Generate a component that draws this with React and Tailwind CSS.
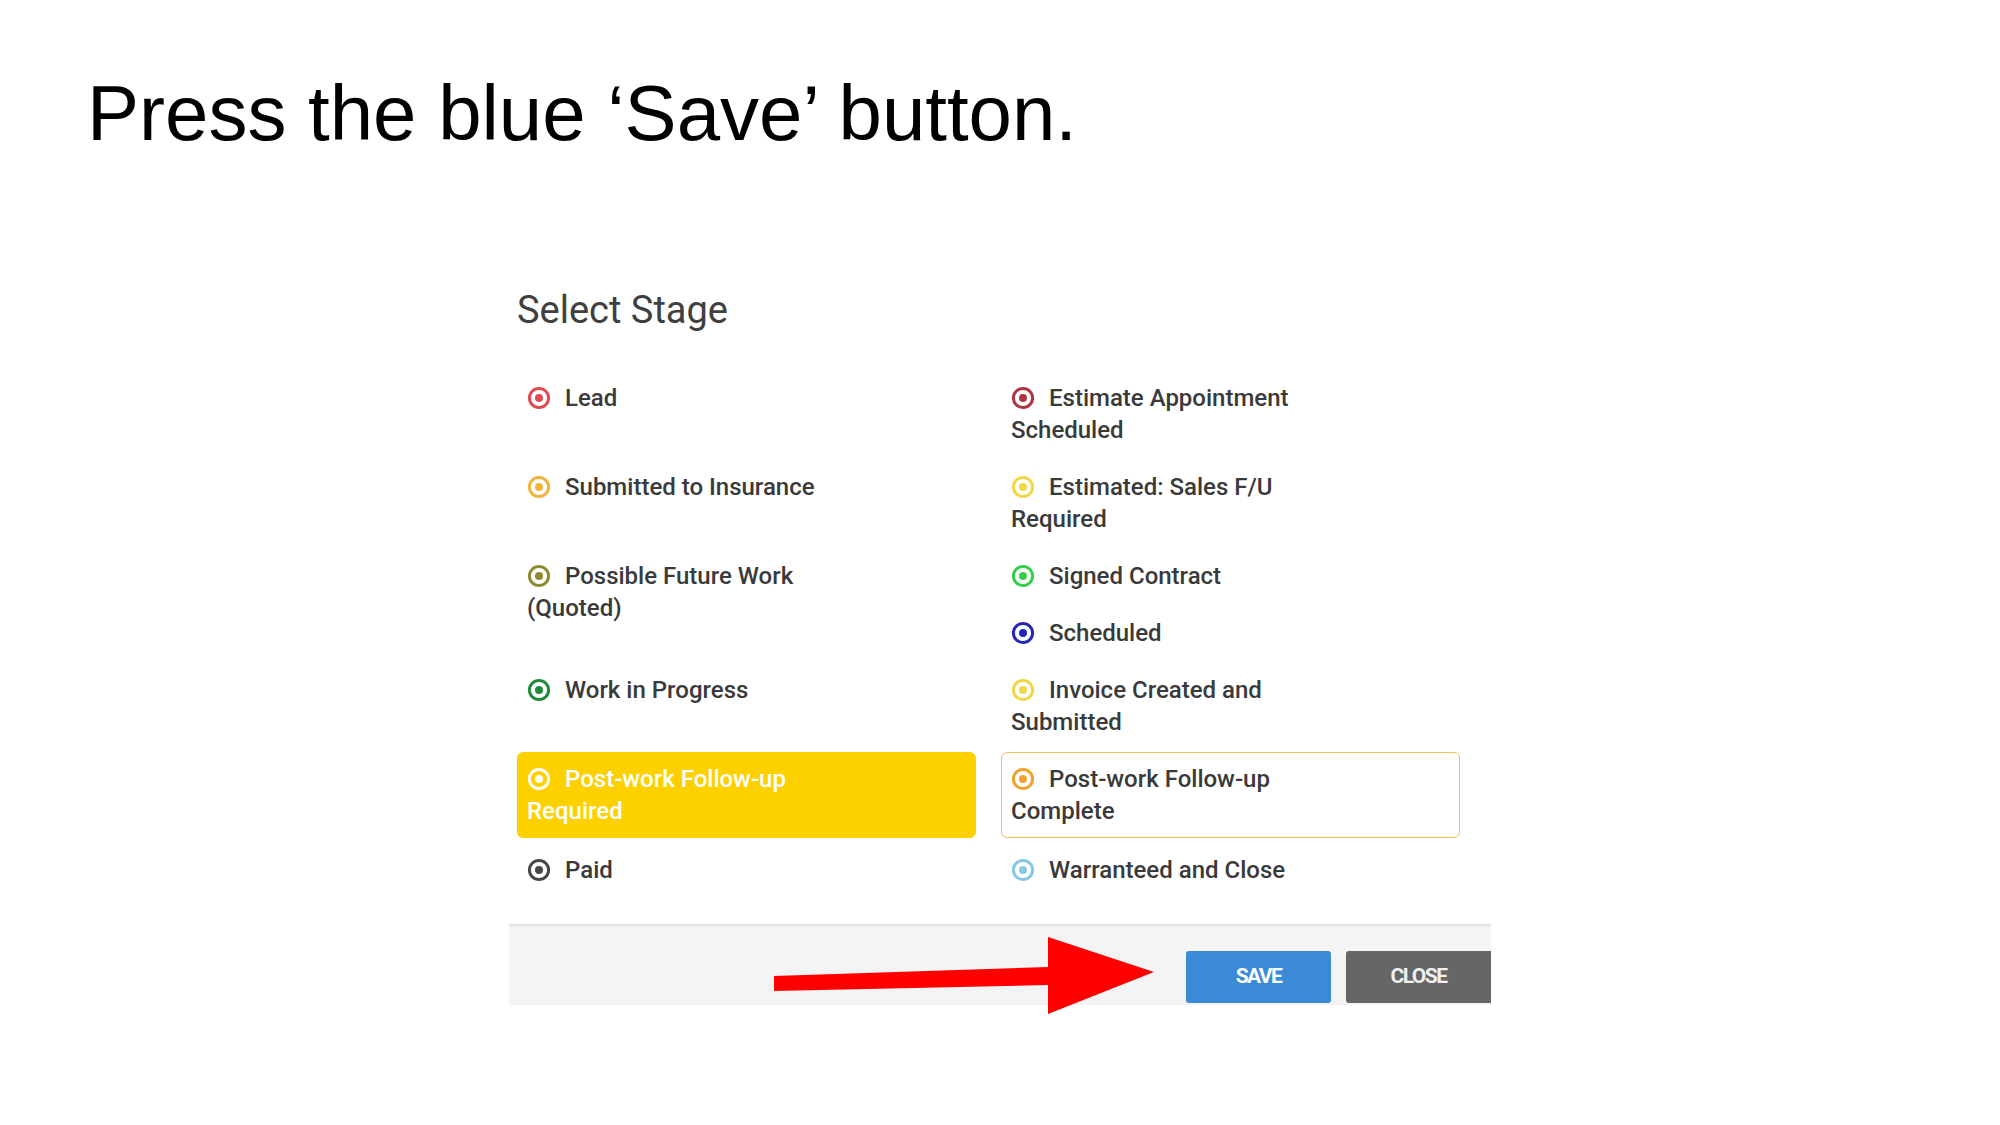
import React from 'react';

// Stage list, laid out as two columns of rows (right cell of row 3 holds two stages)
const rows = [
  [[{ label: 'Lead', color: '#e04a55' }], [{ label: 'Estimate Appointment Scheduled', color: '#ad3643' }]],
  [[{ label: 'Submitted to Insurance', color: '#efb43e' }], [{ label: 'Estimated: Sales F/U Required', color: '#f1d646' }]],
  [
    [{ label: 'Possible Future Work (Quoted)', color: '#8c8c2c' }],
    [
      { label: 'Signed Contract', color: '#34cf48' },
      { label: 'Scheduled', color: '#2626b6' },
    ],
  ],
  [[{ label: 'Work in Progress', color: '#208a3c' }], [{ label: 'Invoice Created and Submitted', color: '#f1d646' }]],
  [
    [{ label: 'Post-work Follow-up Required', color: '#ffffff', active: true }],
    [{ label: 'Post-work Follow-up Complete', color: '#f0a22e', outlined: true }],
  ],
  [[{ label: 'Paid', color: '#474747' }], [{ label: 'Warranteed and Close', color: '#86c8e6' }]],
];

const RadioIcon = ({ color }) => (
  <svg width="24" height="24" viewBox="0 0 24 24" className="inline-block align-[-4px] mr-[14px]">
    <circle cx="12" cy="12" r="9.6" fill="none" stroke={color} strokeWidth="3" />
    <circle cx="12" cy="12" r="4" fill={color} />
  </svg>
);

const StageItem = ({ stage }) => {
  let box = 'border-transparent text-[#3a3a3a]';
  if (stage.active) box = 'border-[#fdd000] bg-[#fdd000] text-white';
  if (stage.outlined) box = 'border-[#eec55a] bg-white text-[#3a3a3a]';

  return (
    <div className={`rounded-[6px] border px-[9px] py-[10px] mb-[3px] ${box}`}>
      <div className="max-w-[315px] text-[24px] leading-[32px] font-medium">
        <RadioIcon color={stage.color} />
        {stage.label}
      </div>
    </div>
  );
};

export default function App() {
  return (
    <div
      className="relative w-[2000px] h-[1125px] overflow-hidden bg-white"
      style={{ fontFamily: 'Roboto, "Noto Sans", sans-serif' }}
    >
      {/* Slide title */}
      <h1
        className="pt-[74px] pl-[87px] text-[78px] leading-none text-black font-normal"
        style={{ fontFamily: '"Liberation Sans", Arial, sans-serif' }}
      >
        Press the blue ‘Save’ button.
      </h1>

      {/* Dialog screenshot */}
      <div className="mt-[136px] ml-[509px] w-[982px] overflow-hidden">
        <h2 className="pl-[8px] text-[38px] leading-[44px] font-normal text-[#404040]">Select Stage</h2>

        <div className="mt-[39px] px-[8px] grid grid-cols-[459px_459px] gap-x-[25px]">
          {rows.map((row, i) => (
            <React.Fragment key={i}>
              {row.map((cell, j) => (
                <div key={j} className={i === 4 ? 'mb-[2px]' : ''}>
                  {cell.map((stage) => (
                    <StageItem key={stage.label} stage={stage} />
                  ))}
                </div>
              ))}
            </React.Fragment>
          ))}
        </div>

        {/* Footer with buttons */}
        <div className="mt-[24px] h-[81px] border-t-2 border-[#e2e2e2] bg-[#f4f4f4] pt-[25px] flex justify-end gap-[15px]">
          <button className="w-[145px] h-[52px] rounded-[3px] bg-[#3b8ad6] text-white text-[21px] font-bold tracking-[-1.5px] uppercase">
            Save
          </button>
          <button className="w-[145px] h-[52px] rounded-l-[3px] bg-[#666666] text-[#f0f0f0] text-[21px] font-bold tracking-[-1.5px] uppercase">
            Close
          </button>
        </div>
      </div>

      {/* Red annotation arrow */}
      <svg className="absolute left-0 top-0" width="2000" height="1125" viewBox="0 0 2000 1125">
        <polygon
          points="774,976 1048,967 1048,937 1154,972 1048,1014 1048,985 774,991"
          fill="#ff0000"
        />
      </svg>
    </div>
  );
}
